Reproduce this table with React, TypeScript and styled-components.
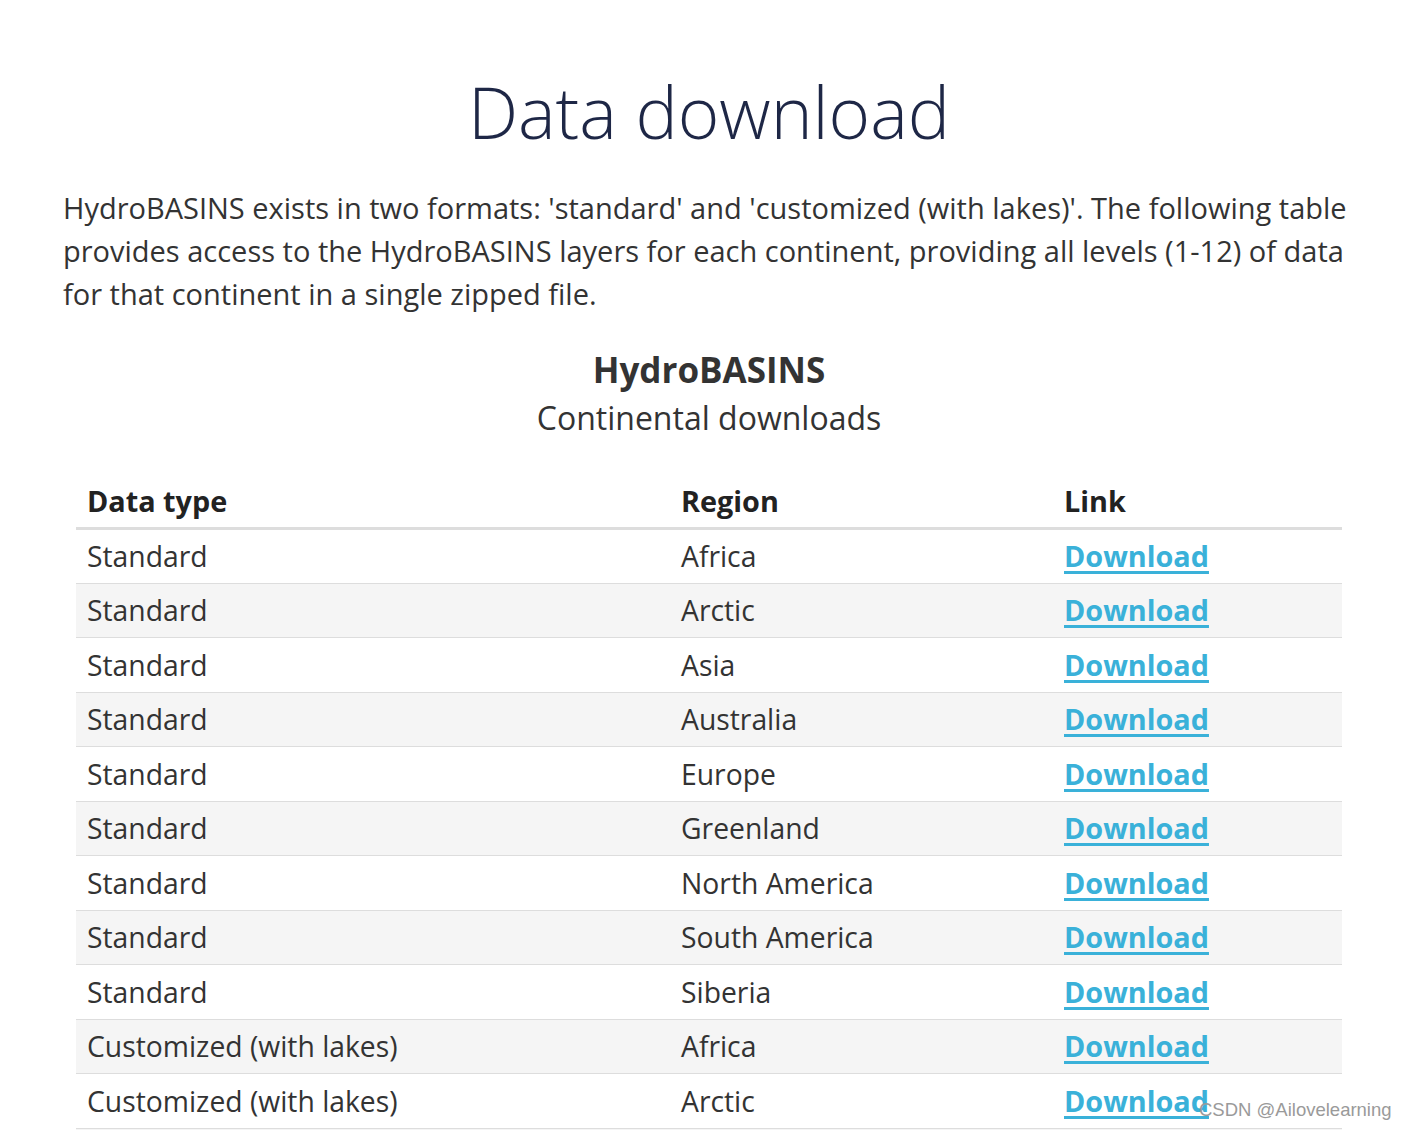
import React from "react";
import styled, { createGlobalStyle } from "styled-components";

const Global = createGlobalStyle`
  html, body { margin: 0; padding: 0; background: #fff; }
  body { font-family: "Open Sans", "Noto Sans", sans-serif; color: #333; }
`;

const Page = styled.div`
  position: relative;
  width: 1407px;
  height: 1130px;
  overflow: hidden;
`;

const Container = styled.main`
  margin-left: 63px;
  width: 1292px;
  padding-top: 64px;
`;

const Title = styled.h1`
  margin: 0;
  text-align: center;
  font-family: "Open Sans", sans-serif;
  font-weight: 300;
  font-size: 71px;
  line-height: 96px;
  color: #1e2746;
`;

const Intro = styled.p`
  margin: 26px 0 0;
  font-size: 29px;
  line-height: 43px;
  color: #333;
`;

const Caption = styled.div`
  margin-top: 31px;
  text-align: center;
  color: #333;
`;

const CaptionTitle = styled.div`
  font-weight: 700;
  font-size: 35px;
  line-height: 48px;
`;

const CaptionSub = styled.div`
  font-size: 32px;
  line-height: 48px;
`;

const Table = styled.table`
  margin: 34px 0 0 13px;
  width: 1266px;
  border-collapse: collapse;
  table-layout: fixed;
  font-size: 28.3px;
`;

const HeadCell = styled.th<{ $w: number }>`
  width: ${(p) => p.$w}px;
  text-align: left;
  font-weight: 700;
  font-size: 28.8px;
  color: #222;
  padding: 6px 11px 7px;
  line-height: 38px;
  border-bottom: 3px solid #ddd;
`;

const Row = styled.tr<{ $striped: boolean }>`
  height: 54.5px;
  background: ${(p) => (p.$striped ? "#f5f5f5" : "#fff")};
  border-bottom: 1px solid #ddd;
`;

const Cell = styled.td`
  padding: 0 11px;
  line-height: 36px;
  vertical-align: middle;
  color: #333;
  white-space: nowrap;
`;

const DownloadLink = styled.a`
  color: #3ab1d9;
  font-weight: 700;
  font-size: 28.8px;
  text-decoration: underline;
  text-decoration-thickness: 3px;
  text-underline-offset: 4px;
`;

const Watermark = styled.div`
  position: absolute;
  left: 1199px;
  top: 1099px;
  font-family: "Liberation Sans", Arial, sans-serif;
  font-size: 18.5px;
  color: #9a9a9a;
  white-space: nowrap;
`;

const rows: [string, string][] = [
  ["Standard", "Africa"],
  ["Standard", "Arctic"],
  ["Standard", "Asia"],
  ["Standard", "Australia"],
  ["Standard", "Europe"],
  ["Standard", "Greenland"],
  ["Standard", "North America"],
  ["Standard", "South America"],
  ["Standard", "Siberia"],
  ["Customized (with lakes)", "Africa"],
  ["Customized (with lakes)", "Arctic"],
  ["Customized (with lakes)", "Asia"],
];

export default function App() {
  return (
    <Page>
      <Global />
      <Container>
        <Title>Data download</Title>
        <Intro>
          HydroBASINS exists in two formats: 'standard' and 'customized (with lakes)'. The following table
          provides access to the HydroBASINS layers for each continent, providing all levels (1-12) of data
          for that continent in a single zipped file.
        </Intro>
        <Caption>
          <CaptionTitle>HydroBASINS</CaptionTitle>
          <CaptionSub>Continental downloads</CaptionSub>
        </Caption>
        <Table>
          <thead>
            <tr>
              <HeadCell $w={572}>Data type</HeadCell>
              <HeadCell $w={361}>Region</HeadCell>
              <HeadCell $w={267}>Link</HeadCell>
            </tr>
          </thead>
          <tbody>
            {rows.map(([t, r], i) => (
              <Row key={i} $striped={i % 2 === 1}>
                <Cell>{t}</Cell>
                <Cell>{r}</Cell>
                <Cell>
                  <DownloadLink href="#">Download</DownloadLink>
                </Cell>
              </Row>
            ))}
          </tbody>
        </Table>
      </Container>
      <Watermark>CSDN @Ailovelearning</Watermark>
    </Page>
  );
}
